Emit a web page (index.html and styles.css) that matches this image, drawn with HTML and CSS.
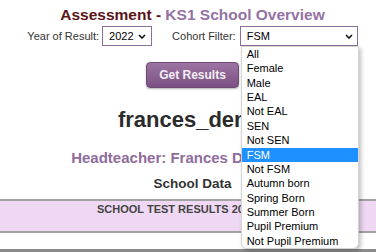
FILE: index.html
```html
<!DOCTYPE html>
<html lang="en">
<head>
<meta charset="utf-8">
<title>Assessment - KS1 School Overview</title>
<link rel="stylesheet" href="styles.css">
</head>
<body>
<div class="page">
  <h2 class="title"><span class="title-main">Assessment -</span> <span class="title-sub">KS1 School Overview</span></h2>
  <div class="filters">
    <span class="label">Year of Result:</span>
    <div class="select select-year">
      <span class="select-value">2022</span>
      <svg class="chev" width="8" height="5" viewBox="0 0 8 5"><path d="M1 1 L4 4 L7 1" fill="none" stroke="#111" stroke-width="1.6"/></svg>
    </div>
    <span class="label label-cohort">Cohort Filter:</span>
    <div class="select select-cohort">
      <span class="select-value">FSM</span>
      <svg class="chev" width="8" height="5" viewBox="0 0 8 5"><path d="M1 1 L4 4 L7 1" fill="none" stroke="#111" stroke-width="1.6"/></svg>
      <ul class="options">
        <li>All</li>
        <li>Female</li>
        <li>Male</li>
        <li>EAL</li>
        <li>Not EAL</li>
        <li>SEN</li>
        <li>Not SEN</li>
        <li class="selected">FSM</li>
        <li>Not FSM</li>
        <li>Autumn born</li>
        <li>Spring Born</li>
        <li>Summer Born</li>
        <li>Pupil Premium</li>
        <li>Not Pupil Premium</li>
      </ul>
    </div>
  </div>
  <div class="actions">
    <button class="btn">Get Results</button>
  </div>
  <h1 class="school-name">frances_demo</h1>
  <h3 class="head">Headteacher: Frances Devonshire</h3>
  <h4 class="sub">School Data</h4>
  <div class="band">SCHOOL TEST RESULTS 2022 (KS1)</div>
  <div class="rule"></div>
</div>
</body>
</html>
```

FILE: styles.css
```css
* { box-sizing: border-box; }
html, body { margin: 0; padding: 0; background: #fff; }
body { font-family: "Liberation Sans", Arial, sans-serif; color: #333; }

.page { padding-left: 9px; text-align: center; }

.title {
  margin: 6px 0 0;
  font-size: 15.5px;
  line-height: 18px;
  font-weight: bold;
}
.title-main { color: #5a1418; }
.title-sub { color: #9472a3; }

.filters {
  margin-top: 2px;
  height: 20px;
  display: flex;
  justify-content: center;
  align-items: center;
  font-size: 11px;
}
.label { color: #333; margin-right: 3px; }
.label-cohort { margin-left: 20px; margin-right: 4px; }

.select {
  position: relative;
  height: 20px;
  border: 1px solid #8f6e9e;
  background: #fff;
  display: flex;
  align-items: center;
  justify-content: space-between;
  color: #000;
  font-size: 11px;
  text-align: left;
}
.select-year { width: 50px; padding: 0 5px 0 6px; }
.select-cohort { width: 118px; padding: 0 4px 0 6px; }
.chev { display: block; }

.options {
  position: absolute;
  top: 19px;
  left: 0;
  width: 118px;
  margin: 0;
  padding: 0;
  list-style: none;
  background: #fff;
  border: 1px solid #d4d4d4;
  border-radius: 0 0 6px 6px;
  box-shadow: 2px 2px 4px rgba(0,0,0,0.25);
  z-index: 5;
}
.options li {
  height: 14.36px;
  line-height: 14.36px;
  padding-left: 5px;
  font-size: 11px;
  color: #000;
  white-space: nowrap;
}
.options li.selected { background: #1e90ff; color: #fff; }

.actions { margin-top: 16px; display: flex; justify-content: center; }
.btn {
  width: 93px;
  height: 26px;
  border: 1px solid #6e4a74;
  border-radius: 4px;
  background: linear-gradient(#9c74a2, #7a5182);
  box-shadow: 0 1px 2px rgba(0,0,0,0.3);
  color: #f4eef5;
  font-family: "Liberation Sans", Arial, sans-serif;
  font-size: 12px;
  font-weight: bold;
  padding: 0;
}

.school-name {
  margin: 19px 0 0;
  font-size: 22px;
  line-height: 25px;
  font-weight: bold;
  color: #2b2b2b;
}
.head {
  margin: 17px 0 0;
  font-size: 15px;
  line-height: 17px;
  font-weight: bold;
  color: #8e6c9c;
}
.sub {
  margin: 10px 0 0;
  font-size: 13.5px;
  line-height: 16px;
  font-weight: bold;
  color: #333;
}

.band {
  margin: 7px 0 0 -9px;
  border-top: 2px solid #a2a2a2;
  border-bottom: 2px solid #a2a2a2;
  background: #efd8f3;
  padding: 2px 0 15px 9px;
  font-size: 11px;
  line-height: 13px;
  font-weight: bold;
  color: #444;
}
.rule {
  margin: 16px 0 0 -9px;
  border-top: 3px solid #8a8a8a;
}
```
